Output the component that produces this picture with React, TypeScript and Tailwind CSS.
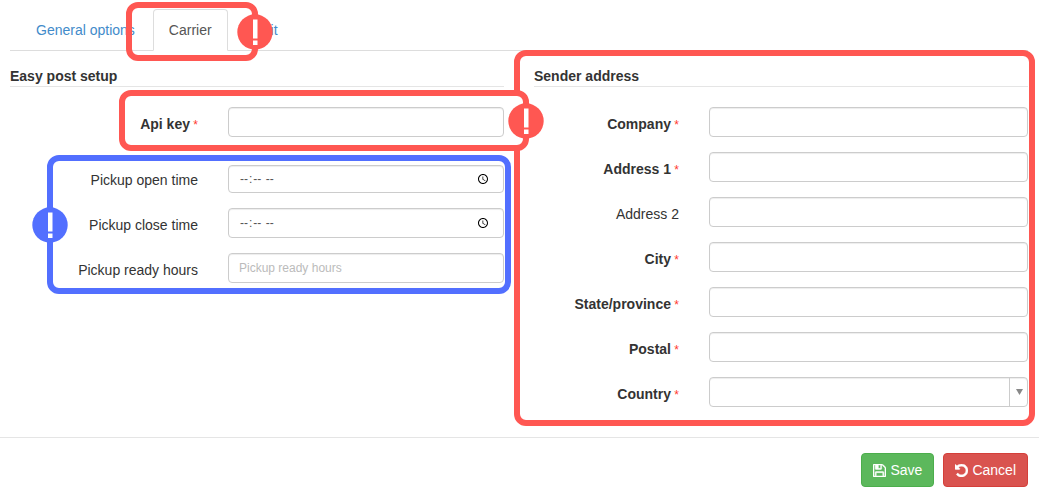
import React, { useId } from 'react';
import clsx from 'clsx';

interface CalloutProps {
  className: string;
  color: 'red' | 'blue';
  badge?: 'left' | 'right';
}

// Rounded marker frame with an optional exclamation badge on one side
const Callout: React.FC<CalloutProps> = ({ className, color, badge }) => (
  <div
    aria-hidden="true"
    className={clsx(
      'pointer-events-none absolute rounded-xl border-6',
      color === 'red' ? 'border-[#ff5752] text-[#ff5752]' : 'border-[#526fff] text-[#526fff]',
      className,
    )}
  >
    {badge && (
      <svg
        viewBox="0 0 36 36"
        className={clsx('absolute inset-y-0 my-auto size-9', badge === 'right' ? '-right-[21px]' : '-left-[21px]')}
      >
        <circle cx="18" cy="18" r="17.7" fill="currentColor" />
        <path d="M16 5.5h4.5v19H16zM16 26.5h4.5v4.5H16z" fill="#fff" />
      </svg>
    )}
  </div>
);

const inputClass =
  'w-full min-w-0 rounded border border-[#ccc] bg-white px-[10px] text-xs text-[#555] shadow-[inset_0_1px_1px_rgba(0,0,0,0.075)] outline-none placeholder:text-[#bbb] focus:border-[#66afe9]';

interface FieldProps {
  label: string;
  type?: string;
  placeholder?: string;
  required?: boolean;
  short?: boolean;
  labelWidth: string;
  children?: (id: string) => React.ReactNode;
}

const Field: React.FC<FieldProps> = ({ label, type = 'text', placeholder, required, short, labelWidth, children }) => {
  const id = useId();

  return (
    <div className="relative flex min-h-[30px] items-end gap-[30px]">
      <label htmlFor={id} className={clsx('shrink-0 pt-[7px] pb-[3px] text-right', labelWidth)}>
        <span className={required ? 'font-bold' : ''}>{label}</span>
        {required && <span className="text-xs text-[#ff3b30]"> *</span>}
      </label>
      <div className="min-w-0 flex-1">
        {children ? (
          children(id)
        ) : (
          <input
            id={id}
            type={type}
            placeholder={placeholder}
            required={required}
            className={clsx(inputClass, 'block', short ? 'h-7' : 'h-[30px]')}
          />
        )}
      </div>
    </div>
  );
};

const SectionTitle: React.FC<{ children: React.ReactNode }> = ({ children }) => (
  <h2 className="mb-5 border-b border-[#e5e5e5] font-bold">{children}</h2>
);

const iconProps = {
  viewBox: '128 128 1536 1536',
  fill: 'currentColor',
  stroke: 'currentColor',
  strokeWidth: 50,
  className: 'size-[13px]',
  'aria-hidden': true,
};

const SaveIcon = () => (
  <svg {...iconProps}>
    <path d="M512 1536h768v-384h-768v384zm896 0h128v-896q0-14-10-38.5t-20-34.5l-281-281q-10-10-34-20t-39-10v416q0 40-28 68t-68 28h-576q-40 0-68-28t-28-68v-416h-128v1280h128v-416q0-40 28-68t68-28h832q40 0 68 28t28 68v416zm-384-928v-320q0-13-9.5-22.5t-22.5-9.5h-192q-13 0-22.5 9.5t-9.5 22.5v320q0 13 9.5 22.5t22.5 9.5h192q13 0 22.5-9.5t9.5-22.5zm640 32v928q0 40-28 68t-68 28h-1344q-40 0-68-28t-28-68v-1344q0-40 28-68t68-28h928q40 0 88 20t76 48l280 280q28 28 48 76t20 88z" />
  </svg>
);

const UndoIcon = () => (
  <svg {...iconProps}>
    <path d="M1664 896q0 156-61 298t-164 245-245 164-298 61q-172 0-327-72.5t-264-204.5q-7-10-6.5-22.5t8.5-20.5l137-138q10-9 25-9 16 2 23 12 73 95 179 147t225 52q104 0 198.5-40.5t163.5-109.5 109.5-163.5 40.5-198.5-40.5-198.5-109.5-163.5-163.5-109.5-198.5-40.5q-98 0-188 35.5t-160 101.5l137 138q31 30 14 69-17 40-59 40h-448q-26 0-45-19t-19-45v-448q0-42 40-59 39-17 69 14l130 129q107-101 244.5-156.5t284.5-55.5q156 0 298 61t245 164 164 245 61 298z" />
  </svg>
);

const tabs = ['General options', 'Carrier', 'Audit'];
const activeTab = 'Carrier';

const addressFields = [
  { label: 'Company', required: true },
  { label: 'Address 1', required: true },
  { label: 'Address 2', required: false },
  { label: 'City', required: true },
  { label: 'State/province', required: true },
  { label: 'Postal', required: true },
];

const App: React.FC = () => {
  return (
    <div className="bg-white font-['Liberation_Sans',Arial,sans-serif] text-sm text-[#333]">
      <div className="pt-[9px] pr-[11px] pl-[10px]">
        <nav>
          <ul className="flex gap-[2px] border-b border-[#ddd] pl-[10px]">
            {tabs.map((tab) => (
              <li key={tab} className={clsx('-mb-px', tab === activeTab && 'relative z-20')}>
                <a
                  href="#"
                  className={clsx(
                    'block rounded-t border px-[15px] py-[10px]',
                    tab === activeTab
                      ? 'border-[#ddd] border-b-white bg-white text-[#555]'
                      : 'border-transparent text-[#428bca]',
                  )}
                >
                  {tab}
                </a>
                {tab === activeTab && (
                  <Callout color="red" badge="right" className="-top-[7px] -right-[30px] -bottom-[10px] -left-[27px]" />
                )}
              </li>
            ))}
          </ul>
        </nav>

        <form className="mt-[15px] grid grid-cols-2 items-start gap-[30px]">
          <section className="relative z-10">
            <SectionTitle>Easy post setup</SectionTitle>
            <div className="relative">
              <Callout
                color="red"
                badge="right"
                className="-top-[17px] -right-[25px] -bottom-[14px] left-[109px] bg-white"
              />
              <Field label="Api key" required labelWidth="w-[188px]" />
            </div>
            <div className="relative mt-[26px] flex flex-col gap-[15px]">
              <Field label="Pickup open time" type="time" short labelWidth="w-[188px]" />
              <Field label="Pickup close time" type="time" labelWidth="w-[188px]" />
              <Field label="Pickup ready hours" placeholder="Pickup ready hours" labelWidth="w-[188px]" />
              <Callout color="blue" badge="left" className="-top-[8px] -right-[7px] -bottom-[11px] left-[37px]" />
            </div>
          </section>

          <section className="relative">
            <SectionTitle>Sender address</SectionTitle>
            <div className="flex flex-col gap-[15px]">
              {addressFields.map((field) => (
                <Field key={field.label} label={field.label} required={field.required} labelWidth="w-[145px]" />
              ))}
              <Field label="Country" required labelWidth="w-[145px]">
                {(id) => (
                  <div className="relative">
                    <select id={id} className={clsx(inputClass, 'block h-[30px] appearance-none')}>
                      <option value=""></option>
                    </select>
                    <span className="pointer-events-none absolute inset-y-0 right-0 flex w-[19px] items-center justify-center border-l border-[#ccc]">
                      <svg viewBox="0 0 7 6" className="h-[6px] w-[7px] fill-[#888]" aria-hidden="true">
                        <path d="M0 0h7L3.5 6z" />
                      </svg>
                    </span>
                  </div>
                )}
              </Field>
            </div>
            <Callout color="red" className="-top-[16px] -right-[7px] -bottom-[19px] -left-[20px]" />
          </section>
        </form>
      </div>

      <footer className="mt-[30px] flex justify-end gap-[9px] border-t border-[#e5e5e5] pt-[15px] pr-[11px] pb-1">
        <button
          type="button"
          className="flex h-[34px] items-center gap-1 rounded border border-[#4cae4c] bg-[#5cb85c] px-[11px] text-white"
        >
          <SaveIcon />
          Save
        </button>
        <button
          type="button"
          className="flex h-[34px] items-center gap-1 rounded border border-[#d43f3a] bg-[#d9534f] px-[11px] text-white"
        >
          <UndoIcon />
          Cancel
        </button>
      </footer>
    </div>
  );
};

export default App;
